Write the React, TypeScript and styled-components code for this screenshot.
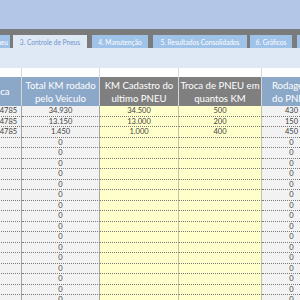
import React from "react";
import styled, { createGlobalStyle } from "styled-components";

const GlobalStyle = createGlobalStyle`
  html, body { margin: 0; padding: 0; }
  body { width: 300px; height: 300px; overflow: hidden; background: #ffffff; font-family: Lato, "Open Sans", sans-serif; }
`;

const Page = styled.div`
  width: 300px;
  height: 300px;
  overflow: hidden;
  display: flex;
  flex-direction: column;
`;

const TopBar = styled.div`
  height: 29px;
  flex: none;
  background: #b4c6e7;
`;

const TabStrip = styled.div`
  height: 19px;
  flex: none;
  background: #7b7b7b;
  display: flex;
  align-items: flex-end;
  white-space: nowrap;
`;

const Tab = styled.div<{ $w: number; $gap: number; $active?: boolean; $end?: boolean }>`
  flex: none;
  width: ${(p) => p.$w}px;
  margin-left: ${(p) => p.$gap}px;
  height: 13px;
  box-sizing: border-box;
  background: ${(p) => (p.$active ? "#dfe9f5" : "#9fc2e8")};
  color: ${(p) => (p.$active ? "#6f95cc" : "#ffffff")};
  font-size: 6.6px;
  display: flex;
  align-items: center;
  justify-content: ${(p) => (p.$end ? "flex-end" : "center")};
  overflow: hidden;
  padding: ${(p) => (p.$end ? "0 2px 0 0" : "0")};
  ${(p) => (p.$active ? "height: 14px; margin-bottom: -1px;" : "")}
`;

const Ribbon = styled.div`
  height: 20px;
  flex: none;
  background: #dfe9f5;
`;

const Grid = styled.div`
  margin-left: -24px;
  display: grid;
  grid-template-columns: 46px 78px 79px 83px 60px;
  grid-auto-rows: auto;
`;

const Gap = styled.div`
  height: 9px;
  background: #ffffff;
  box-sizing: border-box;
  border-right: 1px solid #d9d9d9;
`;

const Head = styled.div<{ $tone: "blue" | "grey" }>`
  height: 29px;
  box-sizing: border-box;
  background: ${(p) => (p.$tone === "blue" ? "#8ca8c9" : "#7f7f7f")};
  border-right: 1px solid #d6d6d6;
  color: #ffffff;
  font-size: 9.6px;
  line-height: 13px;
  display: flex;
  align-items: center;
  justify-content: center;
  text-align: center;
  white-space: nowrap;
  overflow: hidden;
`;

const Cell = styled.div<{ $yellow?: boolean }>`
  height: 10.5px;
  box-sizing: border-box;
  background: ${(p) => (p.$yellow ? "#ffffcc" : "#f2f2f2")};
  border-right: 1px solid ${(p) => (p.$yellow ? "#c4c4a0" : "#a6a6a6")};
  border-bottom: 1px dotted #7a7a7a;
  color: #3f3f3f;
  font-size: 7.5px;
  line-height: 9.5px;
  text-align: center;
  white-space: nowrap;
  overflow: hidden;
`;

type Row = { a: string; b: string; c: string; d: string; e: string };

const filled: Row[] = [
  { a: "MNP-4785", b: "34.930", c: "34.500", d: "500", e: "430" },
  { a: "MNP-4785", b: "13.150", c: "13.000", d: "200", e: "150" },
  { a: "MNP-4785", b: "1.450", c: "1.000", d: "400", e: "450" },
];

const rows: Row[] = [
  ...filled,
  ...Array.from({ length: 17 }, () => ({ a: "", b: "0", c: "", d: "", e: "0" })),
];

export default function App() {
  return (
    <Page>
      <GlobalStyle />
      <TopBar />
      <TabStrip>
        <Tab $w={10} $gap={0} $end>
          Pneu
        </Tab>
        <Tab $w={74} $gap={3} $active>
          3. Controle de Pneus
        </Tab>
        <Tab $w={56} $gap={5}>
          4. Manutenção
        </Tab>
        <Tab $w={94} $gap={5}>
          5. Resultados Consolidados
        </Tab>
        <Tab $w={42} $gap={3}>
          6. Gráficos
        </Tab>
        <Tab $w={20} $gap={5}>
          7.
        </Tab>
      </TabStrip>
      <Ribbon />
      <Grid>
        <Gap />
        <Gap />
        <Gap />
        <Gap />
        <Gap />
        <Head $tone="blue">Placa</Head>
        <Head $tone="blue">
          Total KM rodado
          <br />
          pelo Veiculo
        </Head>
        <Head $tone="grey">
          KM Cadastro do
          <br />
          ultimo PNEU
        </Head>
        <Head $tone="grey">
          Troca de PNEU em
          <br />
          quantos KM
        </Head>
        <Head $tone="blue">
          Rodagem
          <br />
          do PNEU
        </Head>
        {rows.map((r, i) => (
          <React.Fragment key={i}>
            <Cell>{r.a}</Cell>
            <Cell>{r.b}</Cell>
            <Cell $yellow>{r.c}</Cell>
            <Cell $yellow>{r.d}</Cell>
            <Cell>{r.e}</Cell>
          </React.Fragment>
        ))}
      </Grid>
    </Page>
  );
}
